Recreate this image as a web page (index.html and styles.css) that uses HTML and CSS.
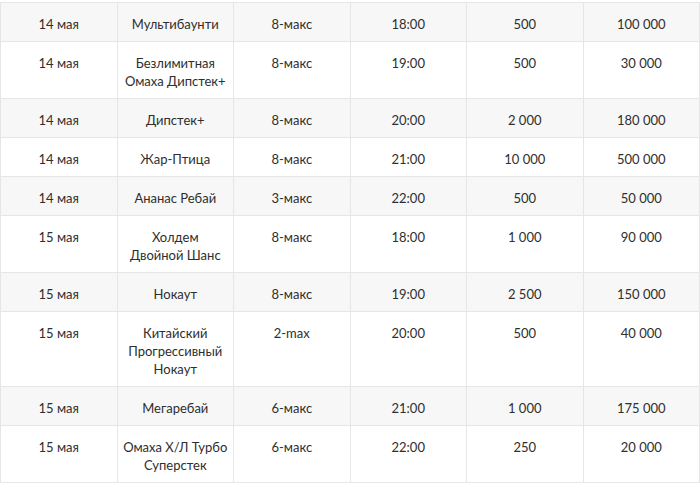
FILE: index.html
```html
<!DOCTYPE html>
<html lang="ru">
<head>
<meta charset="utf-8">
<title>Расписание турниров</title>
<link rel="stylesheet" href="styles.css">
</head>
<body>
<table class="schedule">
  <colgroup>
    <col class="c"><col class="c"><col class="c"><col class="c"><col class="c"><col class="c">
  </colgroup>
  <tbody>
    <tr class="alt"><td>14 мая</td><td>Мультибаунти</td><td>8-макс</td><td>18:00</td><td>500</td><td>100 000</td></tr>
    <tr><td>14 мая</td><td>Безлимитная Омаха Дипстек+</td><td>8-макс</td><td>19:00</td><td>500</td><td>30 000</td></tr>
    <tr class="alt"><td>14 мая</td><td>Дипстек+</td><td>8-макс</td><td>20:00</td><td>2 000</td><td>180 000</td></tr>
    <tr><td>14 мая</td><td>Жар-Птица</td><td>8-макс</td><td>21:00</td><td>10 000</td><td>500 000</td></tr>
    <tr class="alt"><td>14 мая</td><td>Ананас Ребай</td><td>3-макс</td><td>22:00</td><td>500</td><td>50 000</td></tr>
    <tr><td>15 мая</td><td>Холдем Двойной&nbsp;Шанс</td><td>8-макс</td><td>18:00</td><td>1 000</td><td>90 000</td></tr>
    <tr class="alt"><td>15 мая</td><td>Нокаут</td><td>8-макс</td><td>19:00</td><td>2 500</td><td>150 000</td></tr>
    <tr><td>15 мая</td><td>Китайский Прогрессивный Нокаут</td><td>2-max</td><td>20:00</td><td>500</td><td>40 000</td></tr>
    <tr class="alt"><td>15 мая</td><td>Мегаребай</td><td>6-макс</td><td>21:00</td><td>1 000</td><td>175 000</td></tr>
    <tr><td>15 мая</td><td>Омаха Х/Л Турбо Суперстек</td><td>6-макс</td><td>22:00</td><td>250</td><td>20 000</td></tr>
  </tbody>
</table>
</body>
</html>
```

FILE: styles.css
```css
html, body {
  margin: 0;
  padding: 0;
  background: #ffffff;
}
body {
  padding-top: 2px;
  font-family: "Lato", "Liberation Sans", sans-serif;
  font-size: 13px;
  color: #2e2e2e;
}
.schedule {
  width: 700px;
  border-collapse: collapse;
  table-layout: fixed;
}
.schedule .c {
  width: 16.6667%;
}
.schedule td {
  border: 1px solid #e6e6e6;
  text-align: center;
  vertical-align: top;
  padding: 12px 5px 8px;
  line-height: 18px;
}
.schedule tr.alt td {
  background: #f7f7f7;
}
```
